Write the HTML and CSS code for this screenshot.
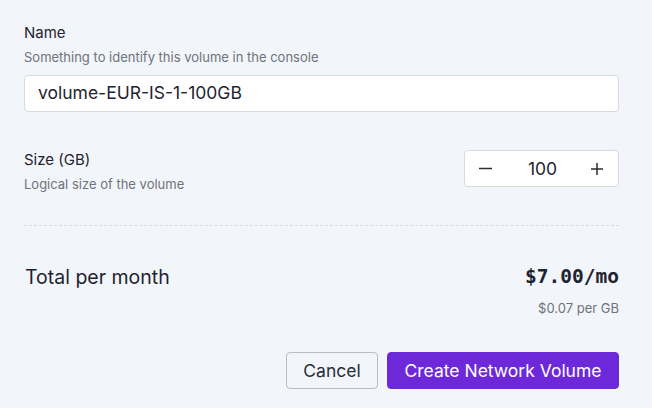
FILE: index.html
```html
<!DOCTYPE html>
<html>
<head>
<meta charset="utf-8">
<link rel="stylesheet" href="styles.css">
</head>
<body>
<div class="form">
  <div class="field">
    <div class="label">Name</div>
    <div class="hint">Something to identify this volume in the console</div>
    <div class="input">volume-EUR-IS-1-100GB</div>
  </div>
  <div class="row size">
    <div>
      <div class="label">Size (GB)</div>
      <div class="hint">Logical size of the volume</div>
    </div>
    <div class="stepper">
      <svg class="step" width="13" height="13" viewBox="0 0 13 13"><path d="M0 6.5H13" stroke="#2a2d35" stroke-width="1.5"/></svg>
      <span class="val">100</span>
      <svg class="step" width="12" height="12" viewBox="0 0 12 12"><path d="M0 6H12M6 0V12" stroke="#2a2d35" stroke-width="1.5"/></svg>
    </div>
  </div>
  <div class="divider"></div>
  <div class="row total">
    <div class="total-label">Total per month</div>
    <div class="price">$7.00/mo</div>
  </div>
  <div class="per">$0.07 per GB</div>
  <div class="actions">
    <button class="btn cancel">Cancel</button>
    <button class="btn primary">Create Network Volume</button>
  </div>
</div>
</body>
</html>
```
FILE: styles.css
```css
html, body { margin: 0; padding: 0; }
body {
  background: #f2f5fa;
  font-family: Inter, "Noto Sans", sans-serif;
  color: #1f2330;
  width: 652px;
  height: 408px;
  overflow: hidden;
}
.form {
  padding: 24px 33px 0 24px;
}
.label {
  font-size: 15px;
  line-height: 18px;
  color: #1f2330;
}
.hint {
  font-size: 13px;
  line-height: 16px;
  color: #6f737b;
  margin-top: 7px;
}
.input {
  margin-top: 10px;
  height: 37px;
  box-sizing: border-box;
  background: #fff;
  border: 1px solid #d8dadf;
  border-radius: 4px;
  padding: 0 13px;
  font-size: 17.5px;
  line-height: 34px;
  color: #1f2330;
}
.row {
  display: flex;
  justify-content: space-between;
  align-items: flex-start;
}
.size {
  margin-top: 39px;
}
.stepper {
  width: 155px;
  height: 37px;
  box-sizing: border-box;
  background: #fff;
  border: 1px solid #d8dadf;
  border-radius: 4px;
  display: flex;
  align-items: center;
  justify-content: space-between;
  padding: 0 15px 0 14px;
  margin-top: -1px;
}
.step { display: block; }
.val { font-size: 17.5px; color: #1f2330; margin-left: 2px; }
.divider {
  margin-top: 33px;
  border-top: 1px dashed #d9dce2;
}
.total {
  margin-top: 40px;
  align-items: center;
}
.total-label {
  font-size: 19.5px;
  line-height: 22px;
  padding-left: 1px;
}
.price {
  font-family: "DejaVu Sans Mono", monospace;
  font-weight: bold;
  font-size: 19.5px;
  line-height: 22px;
  color: #1f2330;
}
.per {
  text-align: right;
  font-size: 13px;
  color: #6f737b;
  margin-top: 12px;
  line-height: 16px;
}
.actions {
  display: flex;
  justify-content: flex-end;
  gap: 9px;
  margin-top: 36px;
}
.btn {
  height: 37px;
  border-radius: 4px;
  font-family: Inter, "Noto Sans", sans-serif;
  font-size: 17.5px;
  padding: 0;
  cursor: pointer;
}
.cancel {
  background: #f2f5fa;
  border: 1px solid #b9bcc2;
  color: #2a2d35;
  width: 92px;
}
.primary {
  background: #6d28d9;
  border: 1px solid #6d28d9;
  color: #fff;
  width: 232px;
}
```
